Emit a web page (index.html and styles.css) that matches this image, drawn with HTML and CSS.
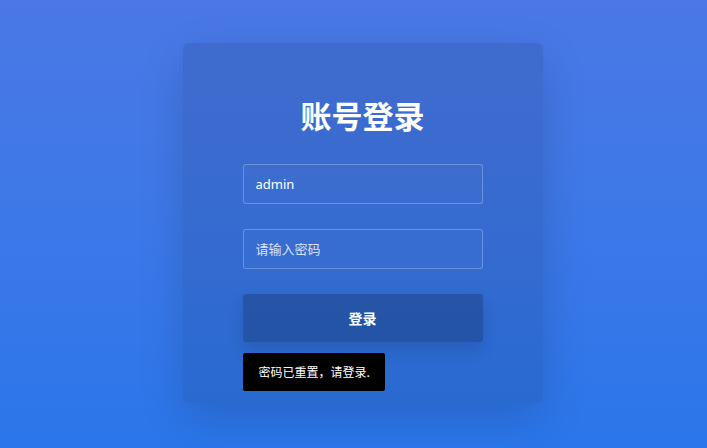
FILE: index.html
```html
<!DOCTYPE html>
<html lang="zh-CN">
<head>
<meta charset="utf-8">
<title>账号登录</title>
<link rel="stylesheet" href="styles.css">
</head>
<body>
<main class="page">
  <section class="card">
    <h1 class="title">账号登录</h1>
    <form class="form">
      <div class="field"><input class="input" type="text" value="admin"></div>
      <div class="field"><input class="input" type="password" placeholder="请输入密码"></div>
      <button class="btn" type="button">登录</button>
      <div class="toast">密码已重置，请登录.</div>
    </form>
  </section>
</main>
</body>
</html>
```
FILE: styles.css
```css
* { box-sizing: border-box; }
html, body { margin: 0; height: 100%; }
body {
  font-family: "Noto Sans", "Noto Sans CJK SC", sans-serif;
  background: linear-gradient(180deg, #4a78e6 0%, #3d78e8 50%, #2a76ea 100%);
  overflow: hidden;
}
.page {
  display: flex;
  justify-content: center;
  padding-top: 43px;
  padding-left: 18px;
}
.card {
  width: 360px;
  height: 360px;
  padding: 54px 60px 0;
  background: rgba(0, 0, 0, 0.1);
  border-radius: 6px;
  box-shadow: 0 15px 45px rgba(0, 0, 0, 0.15);
}
.title {
  margin: 0;
  height: 36px;
  line-height: 36px;
  font-size: 31px;
  font-weight: 700;
  color: #fff;
  text-align: center;
  font-family: "Noto Sans CJK SC", sans-serif;
}
.form {
  margin-top: 31px;
  display: flex;
  flex-direction: column;
}
.field { margin-bottom: 25px; }
.input {
  display: block;
  width: 240px;
  height: 40px;
  padding: 0 12px;
  border: 1px solid rgba(255, 255, 255, 0.25);
  border-radius: 3px;
  background: rgba(255, 255, 255, 0.02);
  color: #fff;
  font-size: 13px;
  font-family: "Noto Sans", "Noto Sans CJK SC", sans-serif;
  outline: none;
}
.input::placeholder { color: rgba(255, 255, 255, 0.82); }
.btn {
  width: 240px;
  height: 48px;
  border: none;
  border-radius: 3px;
  background: rgba(0, 0, 0, 0.2);
  color: #fff;
  font-size: 14px;
  font-weight: 700;
  font-family: "Noto Sans CJK SC", sans-serif;
  box-shadow: 0 8px 16px rgba(0, 0, 0, 0.12);
  cursor: pointer;
}
.toast {
  align-self: flex-start;
  margin-top: 11px;
  height: 38px;
  line-height: 38px;
  padding: 0 15px 0 16px;
  background: #000;
  color: #fff;
  font-size: 12px;
  border-radius: 2px;
  font-family: "Noto Sans CJK SC", sans-serif;
}
```
